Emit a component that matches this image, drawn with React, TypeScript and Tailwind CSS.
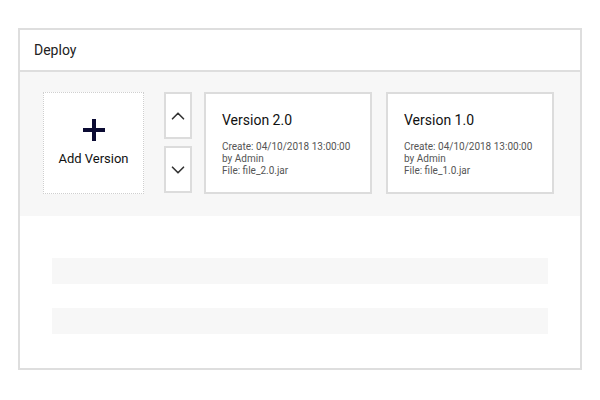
import { ChevronUp, ChevronDown } from "lucide-react";

type Version = { name: string; created: string; by: string; file: string };

const versions: Version[] = [
  { name: "Version 2.0", created: "04/10/2018 13:00:00", by: "Admin", file: "file_2.0.jar" },
  { name: "Version 1.0", created: "04/10/2018 13:00:00", by: "Admin", file: "file_1.0.jar" },
];

function PlusIcon() {
  return (
    <svg width="22" height="22" viewBox="0 0 22 22">
      <rect x="9" y="0" width="4" height="22" fill="#0b0b33" />
      <rect x="0" y="9" width="22" height="4" fill="#0b0b33" />
    </svg>
  );
}

export default function App() {
  return (
    <main className="w-[600px] h-[400px] bg-white pt-[28px] pl-[18px] font-['Roboto',sans-serif]">
      <div className="w-[564px] border-2 border-[#dedede] bg-white">
        {/* Header */}
        <div className="h-[42px] flex items-center pl-[14px] border-b-2 border-[#dedede] text-[14px] text-[#222]">
          Deploy
        </div>

        {/* Versions strip */}
        <section className="h-[144px] bg-[#f7f7f7] pt-5 pl-[23px] flex items-start">
          <button className="w-[101px] h-[102px] bg-white border border-dotted border-[#cfcfcf] flex flex-col items-center justify-center">
            <PlusIcon />
            <span className="mt-[10px] text-[13px] leading-4 text-[#111]">Add Version</span>
          </button>

          <div className="ml-5 w-[28px] flex flex-col gap-[7px]">
            <button className="h-[47px] bg-white border-2 border-[#dcdcdc] flex items-center justify-center">
              <ChevronUp size={22} strokeWidth={1.8} color="#333" />
            </button>
            <button className="h-[47px] bg-white border-2 border-[#dcdcdc] flex items-center justify-center">
              <ChevronDown size={22} strokeWidth={1.8} color="#333" />
            </button>
          </div>

          <div className="ml-3 flex gap-[14px]">
            {versions.map((v) => (
              <div
                key={v.name}
                className="w-[168px] h-[102px] bg-white border-2 border-[#dcdcdc] pl-4 pt-4"
              >
                <div className="text-[14px] leading-5 text-[#111]">{v.name}</div>
                <div className="mt-[11px] text-[10px] leading-[12px] text-[#555]">
                  <div>Create: {v.created}</div>
                  <div>by {v.by}</div>
                  <div>File: {v.file}</div>
                </div>
              </div>
            ))}
          </div>
        </section>

        {/* Placeholder rows */}
        <section className="pt-[42px] pb-[34px] px-8 flex flex-col gap-6">
          <div className="h-[26px] bg-[#f7f7f7]" />
          <div className="h-[26px] bg-[#f7f7f7]" />
        </section>
      </div>
    </main>
  );
}
